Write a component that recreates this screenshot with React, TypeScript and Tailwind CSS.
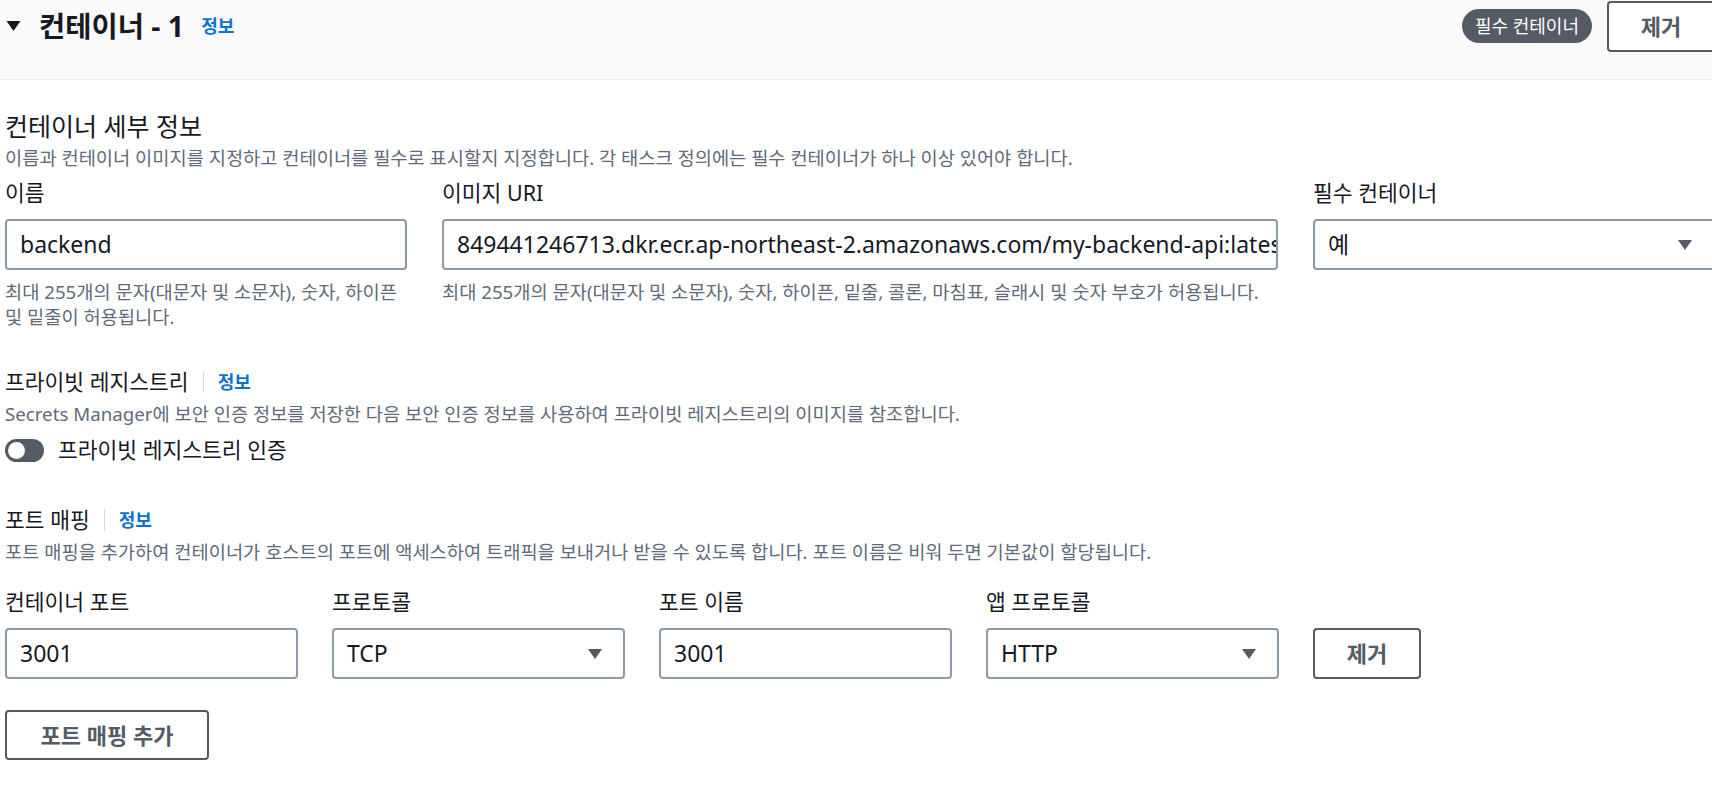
import React from "react";

const Caret = ({ className = "" }: { className?: string }) => (
  <svg className={className} viewBox="0 0 16 12" width="16" height="12">
    <polygon points="1,1 15,1 8,11" fill="currentColor" />
  </svg>
);

const Info = ({ className = "" }: { className?: string }) => (
  <span className={"text-[18px] font-bold text-[#0972d3] " + className}>정보</span>
);

const TextInput = ({ value }: { value: string }) => (
  <div className="h-[51px] border-2 border-[#8d99a8] rounded-[4px] bg-white flex items-center pl-[13px] pr-[6px] overflow-hidden">
    <span className="text-[23px] text-[#16191f] whitespace-nowrap">{value}</span>
  </div>
);

const Select = ({ value }: { value: string }) => (
  <div className="h-[51px] border-2 border-[#8d99a8] rounded-[4px] bg-white flex items-center justify-between pl-[13px] pr-[20px]">
    <span className="text-[23px] text-[#16191f] whitespace-nowrap">{value}</span>
    <Caret className="w-[16px] h-[12px] text-[#545b64]" />
  </div>
);

export default function App() {
  return (
    <div className="w-full h-[798px] overflow-hidden bg-white font-['Noto_Sans','Noto_Sans_CJK_KR',sans-serif] text-[#16191f]">
      {/* Header */}
      <div className="h-[80px] bg-[#fafafa] border-b border-[#eaeded]">
        <div className="h-[52px] flex items-center justify-between">
          <div className="flex items-center pl-[5px]">
            <Caret className="w-[17px] h-[12px] text-[#16191f]" />
            <span className="ml-[17px] text-[28.5px] font-bold leading-none">컨테이너 - 1</span>
            <Info className="ml-[17px]" />
          </div>
          <div className="flex items-center gap-[15px] mr-[-3px]">
            <span className="h-[34px] px-[13px] rounded-full bg-[#545b64] text-white text-[18px] flex items-center">
              필수 컨테이너
            </span>
            <button className="h-[51px] w-[108px] border-2 border-[#545b64] rounded-[4px] bg-white text-[22px] font-bold text-[#545b64]">
              제거
            </button>
          </div>
        </div>
      </div>

      <div className="pl-[5px]">
        {/* Container details */}
        <div className="pt-[30px] text-[25px] leading-[32px]">컨테이너 세부 정보</div>
        <div className="mt-[3px] text-[18.7px] leading-[26px] text-[#5f6b7a] whitespace-nowrap">
          이름과 컨테이너 이미지를 지정하고 컨테이너를 필수로 표시할지 지정합니다. 각 태스크 정의에는 필수 컨테이너가 하나 이상 있어야 합니다.
        </div>

        <div className="mt-[8px] grid grid-cols-[402px_836px_402px] gap-x-[35px]">
          <div>
            <div className="text-[21.5px] leading-[28px]">이름</div>
            <div className="mt-[12px]">
              <TextInput value="backend" />
            </div>
            <div className="mt-[9px] text-[18.7px] leading-[25px] text-[#5f6b7a]">
              <div className="whitespace-nowrap">최대 255개의 문자(대문자 및 소문자), 숫자, 하이픈</div>
              <div className="whitespace-nowrap">및 밑줄이 허용됩니다.</div>
            </div>
          </div>
          <div>
            <div className="text-[21.5px] leading-[28px]">이미지 URI</div>
            <div className="mt-[12px]">
              <TextInput value="849441246713.dkr.ecr.ap-northeast-2.amazonaws.com/my-backend-api:latest" />
            </div>
            <div className="mt-[9px] text-[18.7px] leading-[25px] text-[#5f6b7a] whitespace-nowrap">
              최대 255개의 문자(대문자 및 소문자), 숫자, 하이픈, 밑줄, 콜론, 마침표, 슬래시 및 숫자 부호가 허용됩니다.
            </div>
          </div>
          <div>
            <div className="text-[21.5px] leading-[28px]">필수 컨테이너</div>
            <div className="mt-[12px]">
              <Select value="예" />
            </div>
          </div>
        </div>

        {/* Private registry */}
        <div className="mt-[39px] flex items-center h-[28px]">
          <span className="text-[21.5px] leading-[28px]">프라이빗 레지스트리</span>
          <span className="mx-[14px] w-[1px] h-[22px] bg-[#d5dbdb]" />
          <Info />
        </div>
        <div className="mt-[5px] text-[18.7px] leading-[26px] text-[#5f6b7a] whitespace-nowrap">
          Secrets Manager에 보안 인증 정보를 저장한 다음 보안 인증 정보를 사용하여 프라이빗 레지스트리의 이미지를 참조합니다.
        </div>
        <div className="mt-[9px] h-[28px] flex items-center">
          <div className="w-[39px] h-[23px] rounded-full bg-[#545b64] flex items-center pl-[3px]">
            <div className="w-[17px] h-[17px] rounded-full bg-white" />
          </div>
          <span className="ml-[14px] text-[21.5px] leading-[28px]">프라이빗 레지스트리 인증</span>
        </div>

        {/* Port mapping */}
        <div className="mt-[42px] flex items-center h-[28px]">
          <span className="text-[21.5px] leading-[28px]">포트 매핑</span>
          <span className="mx-[14px] w-[1px] h-[22px] bg-[#d5dbdb]" />
          <Info />
        </div>
        <div className="mt-[5px] text-[18.7px] leading-[26px] text-[#5f6b7a] whitespace-nowrap">
          포트 매핑을 추가하여 컨테이너가 호스트의 포트에 액세스하여 트래픽을 보내거나 받을 수 있도록 합니다. 포트 이름은 비워 두면 기본값이 할당됩니다.
        </div>

        <div className="mt-[23px] grid grid-cols-[293px_293px_293px_293px_108px] gap-x-[34px] gap-y-[12px]">
          <div className="text-[21.5px] leading-[28px]">컨테이너 포트</div>
          <div className="text-[21.5px] leading-[28px]">프로토콜</div>
          <div className="text-[21.5px] leading-[28px]">포트 이름</div>
          <div className="text-[21.5px] leading-[28px]">앱 프로토콜</div>
          <div />
          <TextInput value="3001" />
          <Select value="TCP" />
          <TextInput value="3001" />
          <Select value="HTTP" />
          <button className="h-[51px] w-[108px] border-2 border-[#545b64] rounded-[4px] bg-white text-[22px] font-bold text-[#545b64]">
            제거
          </button>
        </div>

        <button className="mt-[31px] h-[50px] w-[204px] border-2 border-[#545b64] rounded-[4px] bg-white text-[22px] font-bold text-[#545b64]">
          포트 매핑 추가
        </button>
      </div>
    </div>
  );
}
